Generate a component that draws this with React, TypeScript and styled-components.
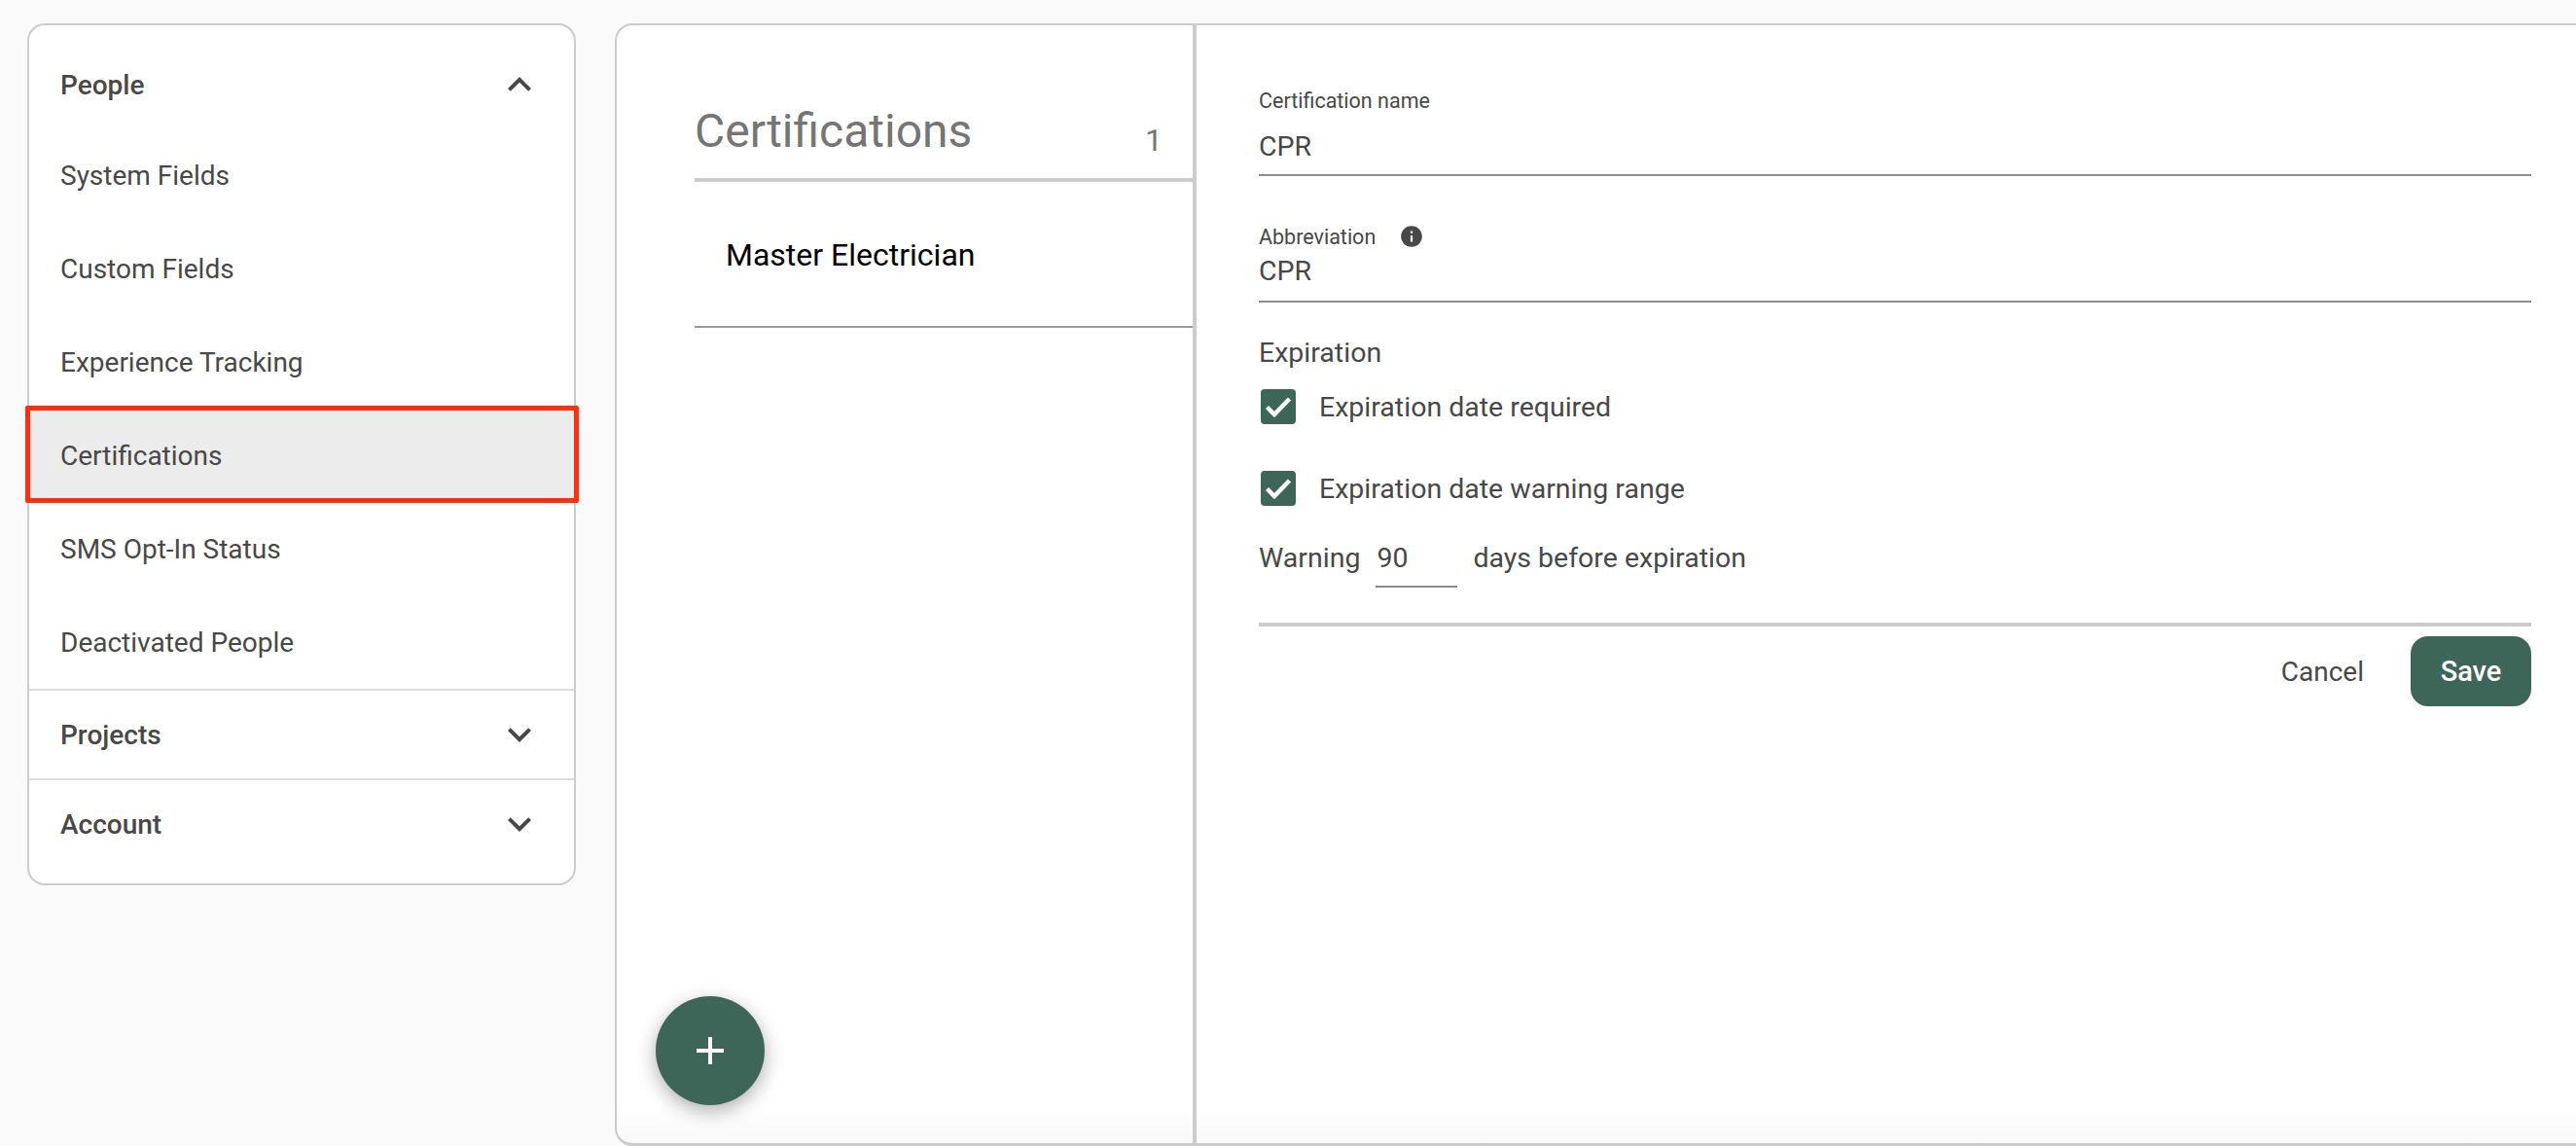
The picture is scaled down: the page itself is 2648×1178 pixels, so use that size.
import React from 'react';
import styled, { createGlobalStyle } from 'styled-components';

const GlobalStyle = createGlobalStyle`
    html, body {
        margin: 0;
        padding: 0;
        height: 100%;
        background: #fafafa;
    }
    body {
        font-family: Roboto, "Liberation Sans", sans-serif;
        color: #484848;
        overflow: hidden;
    }
    * {
        box-sizing: border-box;
    }
`

const green = '#3d6659';

const Page = styled.div`
    display: flex;
    align-items: flex-start;
    width: 2648px;
    height: 1178px;
    padding: 24px 0 0 28px;
    gap: 40px;
    overflow: hidden;
`

const Sidebar = styled.nav`
    flex: none;
    width: 564px;
    height: 886px;
    padding-top: 14px;
    background: #ffffff;
    border: 2px solid #cccccc;
    border-radius: 18px;
`

const NavHeader = styled.div<{ $line?: boolean }>`
    display: flex;
    align-items: center;
    justify-content: space-between;
    height: 92px;
    padding: ${p => (p.$line ? '0' : '2px')} 32px 0;
    font-size: 28px;
    font-weight: 500;
    color: #484848;
    border-top: ${p => (p.$line ? '2px solid #dddddd' : 'none')};
`

const NavItem = styled.div<{ $active?: boolean }>`
    position: relative;
    display: flex;
    align-items: center;
    height: 96px;
    padding: 1px 0 0 32px;
    font-size: 28px;
    color: #484848;
    background: ${p => (p.$active ? '#ececec' : 'transparent')};
    &::after {
        content: ${p => (p.$active ? '""' : 'none')};
        position: absolute;
        top: -3px;
        bottom: -1px;
        left: -4px;
        right: -5px;
        border: 5px solid #ff2e0b;
        border-radius: 2px;
    }
`

const Panel = styled.main`
    position: relative;
    display: flex;
    flex: none;
    width: 2100px;
    height: 1154px;
    background: linear-gradient(to top, #f8f8f8, #ffffff 36px);
    border: 2px solid #cccccc;
    border-bottom-width: 3px;
    border-right: none;
    border-radius: 18px 0 0 18px;
`

const ListColumn = styled.section`
    flex: none;
    width: 592px;
    padding: 0 0 0 80px;
`

const ListHeader = styled.header`
    display: flex;
    align-items: flex-end;
    justify-content: space-between;
    height: 161px;
    padding: 0 31px 18px 0;
    border-bottom: 4px solid #cccccc;
    color: #757575;
`

const ListTitle = styled.h1`
    margin: 0;
    font-size: 48px;
    font-weight: 400;
    line-height: 60px;
`

const ListCount = styled.span`
    font-size: 32px;
    line-height: 40px;
    transform: translateY(-1px);
`

const ListRow = styled.div`
    display: flex;
    align-items: center;
    height: 150px;
    padding: 2px 0 0 32px;
    font-size: 32px;
    color: #000000;
    border-bottom: 2px solid #999999;
`

const Fab = styled.button`
    position: absolute;
    left: 40px;
    bottom: 39px;
    display: flex;
    align-items: center;
    justify-content: center;
    width: 112px;
    height: 112px;
    padding: 0;
    border: none;
    border-radius: 50%;
    background: ${green};
    box-shadow: 0 6px 20px rgba(0, 0, 0, 0.32);
`

const DetailColumn = styled.section`
    flex: none;
    width: 1376px;
    padding: 0 0 0 64px;
    border-left: 4px solid #cccccc;
`

const Field = styled.div<{ $top: number; $pad: number }>`
    margin-top: ${p => p.$top}px;
    padding-bottom: ${p => p.$pad}px;
    border-bottom: 2px solid #8c8c8c;
`

const FieldLabel = styled.label`
    display: flex;
    align-items: center;
    gap: 24px;
    height: 26px;
    font-size: 21.5px;
    color: #484848;
`

const FieldValue = styled.div<{ $gap: number }>`
    margin-top: ${p => p.$gap}px;
    font-size: 28.5px;
    line-height: 34px;
    color: #484848;
`

const SectionLabel = styled.div`
    margin-top: 35px;
    font-size: 28.5px;
    line-height: 34px;
    color: #484848;
`

const CheckRow = styled.div<{ $top: number }>`
    display: flex;
    align-items: center;
    gap: 24px;
    height: 36px;
    margin-top: ${p => p.$top}px;
    padding-left: 2px;
    font-size: 28.5px;
    color: #484848;
`

const CheckBox = styled.span`
    display: flex;
    align-items: center;
    justify-content: center;
    flex: none;
    width: 36px;
    height: 36px;
    border-radius: 4px;
    background: ${green};
`

const WarningRow = styled.div`
    display: flex;
    align-items: flex-start;
    height: 83px;
    margin-top: 37px;
    font-size: 28.5px;
    line-height: 34px;
    color: #484848;
`

const WarningInput = styled.div`
    width: 84px;
    height: 47px;
    margin: 0 16px 0 16px;
    padding-left: 1px;
    border-bottom: 2px solid #8c8c8c;
`

const Actions = styled.div`
    display: flex;
    align-items: center;
    justify-content: flex-end;
    gap: 48px;
    padding-top: 10px;
    border-top: 4px solid #cccccc;
`

const CancelButton = styled.button`
    padding: 0;
    border: none;
    background: none;
    font-family: inherit;
    font-size: 28px;
    color: #484848;
`

const SaveButton = styled.button`
    width: 124px;
    height: 72px;
    padding: 0;
    border: none;
    border-radius: 18px;
    background: ${green};
    font-family: inherit;
    font-size: 29px;
    font-weight: 500;
    color: #ffffff;
`

function Chevron({ up }: { up?: boolean }) {
    return (
        <svg width="48" height="48" viewBox="0 0 24 24" fill="#484848">
            <path d={up ? 'M12 8l-6 6 1.41 1.41L12 10.83l4.59 4.58L18 14z' : 'M16.59 8.59L12 13.17 7.41 8.59 6 10l6 6 6-6z'} />
        </svg>
    );
}

function CheckedBox() {
    return (
        <CheckBox>
            <svg width="28" height="22" viewBox="0 0 28 22" fill="none">
                <path d="M2.5 11.5L10 19L25.5 3" stroke="#ffffff" strokeWidth="4.5" />
            </svg>
        </CheckBox>
    );
}

const peopleItems = ['System Fields', 'Custom Fields', 'Experience Tracking', 'Certifications', 'SMS Opt-In Status', 'Deactivated People'];

export default function App() {
    return (
        <>
            <GlobalStyle />
            <Page>
                <Sidebar>
                    <NavHeader>People<Chevron up /></NavHeader>
                    {peopleItems.map(item => (
                        <NavItem key={item} $active={item === 'Certifications'}>{item}</NavItem>
                    ))}
                    <NavHeader $line>Projects<Chevron /></NavHeader>
                    <NavHeader $line>Account<Chevron /></NavHeader>
                </Sidebar>
                <Panel>
                    <ListColumn>
                        <ListHeader>
                            <ListTitle>Certifications</ListTitle>
                            <ListCount>1</ListCount>
                        </ListHeader>
                        <ListRow>Master Electrician</ListRow>
                    </ListColumn>
                    <Fab>
                        <svg width="28" height="28" viewBox="0 0 28 28" fill="#ffffff">
                            <path d="M12 0h4v12h12v4H16v12h-4V16H0v-4h12z" />
                        </svg>
                    </Fab>
                    <DetailColumn>
                        <Field $top={64} $pad={11}>
                            <FieldLabel>Certification name</FieldLabel>
                            <FieldValue $gap={18}>CPR</FieldValue>
                        </Field>
                        <Field $top={49} $pad={13}>
                            <FieldLabel>
                                Abbreviation
                                <svg width="26" height="26" viewBox="0 0 24 24" fill="#484848">
                                    <path d="M12 2C6.48 2 2 6.48 2 12s4.48 10 10 10 10-4.48 10-10S17.52 2 12 2zm1 15h-2v-6h2v6zm0-8h-2V7h2v2z" />
                                </svg>
                            </FieldLabel>
                            <FieldValue $gap={6}>CPR</FieldValue>
                        </Field>
                        <SectionLabel>Expiration</SectionLabel>
                        <CheckRow $top={20}><CheckedBox />Expiration date required</CheckRow>
                        <CheckRow $top={48}><CheckedBox />Expiration date warning range</CheckRow>
                        <WarningRow>
                            Warning
                            <WarningInput>90</WarningInput>
                            days before expiration
                        </WarningRow>
                        <Actions>
                            <CancelButton>Cancel</CancelButton>
                            <SaveButton>Save</SaveButton>
                        </Actions>
                    </DetailColumn>
                </Panel>
            </Page>
        </>
    );
}
